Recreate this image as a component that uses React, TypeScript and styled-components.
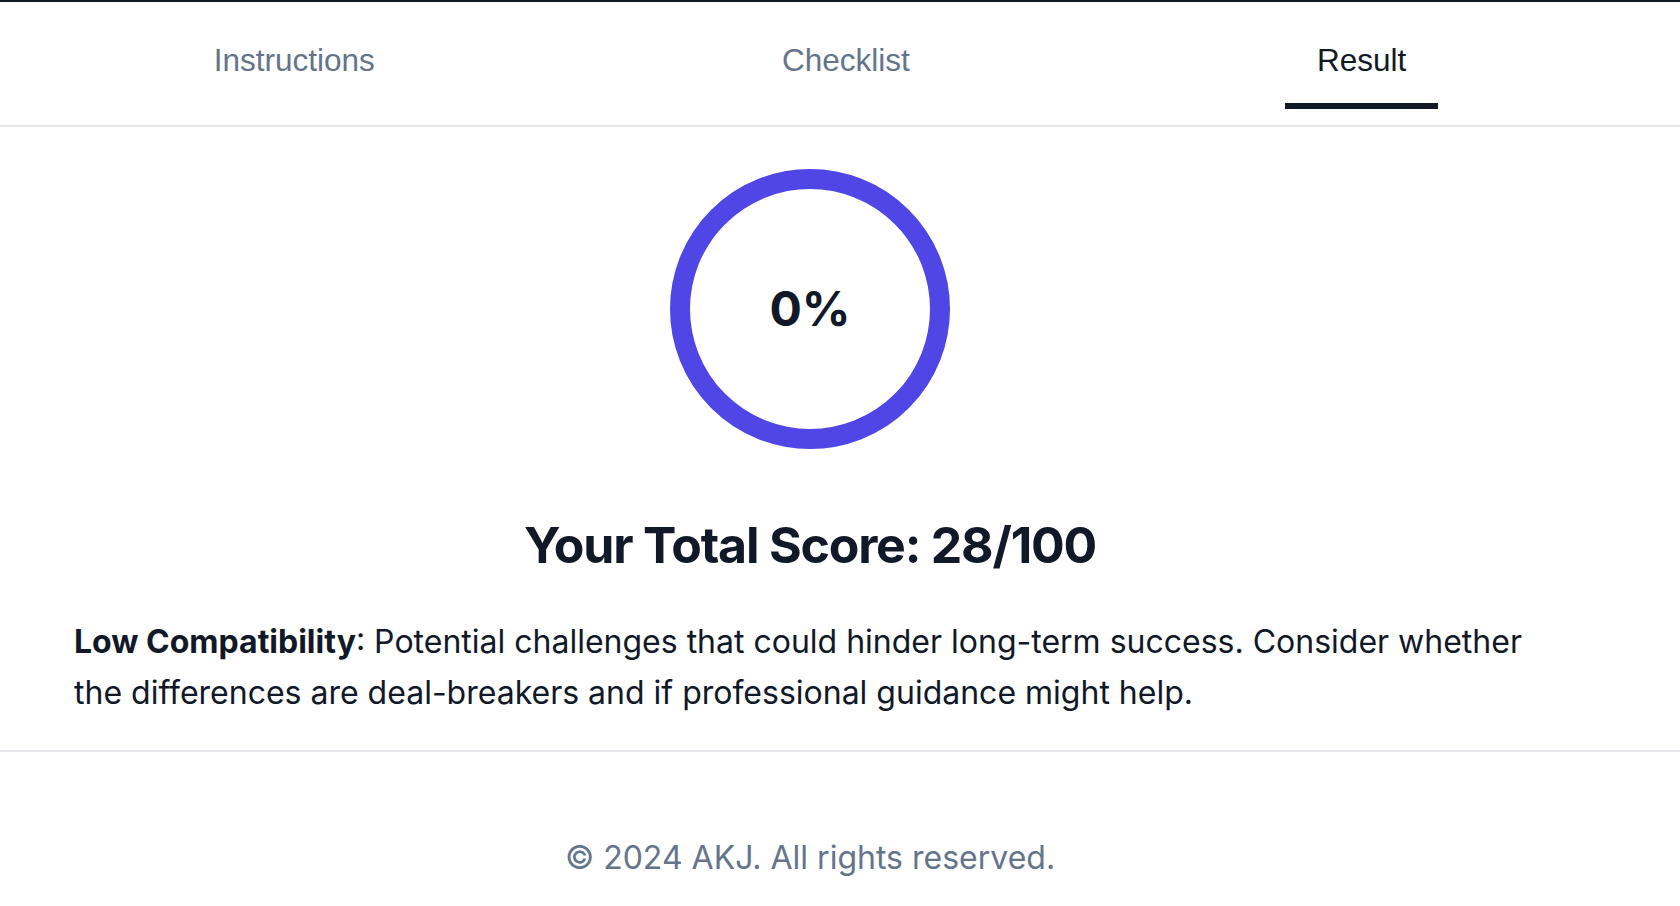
import React from "react";
import styled, { createGlobalStyle } from "styled-components";

const GlobalStyle = createGlobalStyle`
  html, body {
    margin: 0;
    padding: 0;
    background: #ffffff;
  }
  body {
    font-family: Inter, "Noto Sans", sans-serif;
    color: #111827;
  }
  * { box-sizing: border-box; }
`;

const Page = styled.div`
  border-top: 2px solid #111827;
  min-height: 904px;
  background: #ffffff;
`;

const Inner = styled.div`
  width: 1600px;
  margin-left: 10px;
`;

const TabBar = styled.nav`
  border-bottom: 2px solid #e5e7eb;
  padding-bottom: 16px;
`;

const TabRow = styled(Inner)`
  display: flex;
  justify-content: space-around;
  align-items: flex-start;
`;

const Tab = styled.button<{ $active?: boolean }>`
  appearance: none;
  background: none;
  border: none;
  border-bottom: 6px solid ${(p) => (p.$active ? "#111827" : "transparent")};
  padding: 40px 32px 25px;
  margin: 0;
  font-family: "Liberation Sans", Arial, sans-serif;
  font-size: 31.5px;
  line-height: 36px;
  color: ${(p) => (p.$active ? "#111827" : "#64748b")};
  cursor: pointer;
`;

const ResultSection = styled.section`
  border-bottom: 2px solid #e5e7eb;
  padding: 42px 0 32px;
`;

const ResultInner = styled(Inner)`
  display: flex;
  flex-direction: column;
  align-items: center;
`;

const Ring = styled.div`
  width: 280px;
  height: 280px;
  border-radius: 50%;
  border: 20px solid #4f46e5;
  display: flex;
  align-items: center;
  justify-content: center;
`;

const Percent = styled.span`
  font-size: 48px;
  font-weight: 700;
  color: #111827;
  line-height: 1;
`;

const Title = styled.h2`
  margin: 65px 0 39px;
  font-size: 50px;
  line-height: 63px;
  font-weight: 700;
  color: #111827;
  letter-spacing: -1.2px;
`;

const Description = styled.p`
  align-self: stretch;
  margin: 0;
  padding: 0 64px;
  font-size: 32px;
  line-height: 51.2px;
  color: #111827;

  strong {
    font-weight: 700;
  }
`;

const Footer = styled.footer`
  padding-top: 81px;
`;

const FooterText = styled(Inner)`
  text-align: center;
  font-size: 32px;
  line-height: 49px;
  color: #64748b;
`;

const tabs = ["Instructions", "Checklist", "Result"];

export default function App() {
  return (
    <>
      <GlobalStyle />
      <Page>
        <TabBar>
          <TabRow>
            {tabs.map((t) => (
              <Tab key={t} $active={t === "Result"}>
                {t}
              </Tab>
            ))}
          </TabRow>
        </TabBar>
        <ResultSection>
          <ResultInner>
            <Ring>
              <Percent>0%</Percent>
            </Ring>
            <Title>Your Total Score: 28/100</Title>
            <Description>
              <strong>Low Compatibility</strong>: Potential challenges that could hinder
              long-term success. Consider whether the differences are deal-breakers and if
              professional guidance might help.
            </Description>
          </ResultInner>
        </ResultSection>
        <Footer>
          <FooterText>© 2024 AKJ. All rights reserved.</FooterText>
        </Footer>
      </Page>
    </>
  );
}
